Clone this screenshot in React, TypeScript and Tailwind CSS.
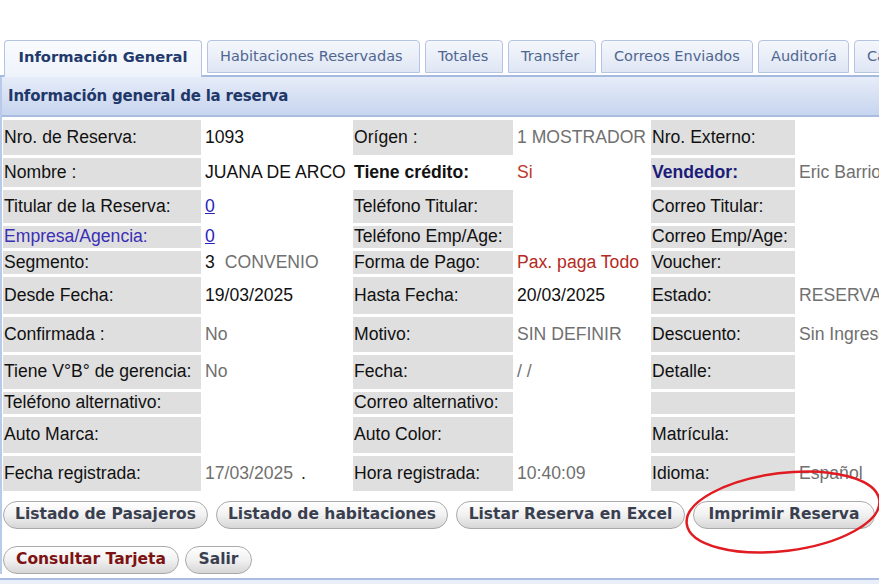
type Cell = { text?: string; kind?: "label" | "value"; color?: string; bold?: boolean; link?: boolean; extra?: string };

const GRAY = "text-[#707070]";
const RED = "text-[#c0392b]";

const rows: { h: string; cells: Cell[] }[] = [
  {
    h: "h-[35px]",
    cells: [
      { text: "Nro. de Reserva:", kind: "label" },
      { text: "1093" },
      { text: "Orígen :", kind: "label" },
      { text: "1 MOSTRADOR", color: GRAY },
      { text: "Nro. Externo:", kind: "label" },
      { text: "" },
    ],
  },
  {
    h: "h-[29px]",
    cells: [
      { text: "Nombre :", kind: "label" },
      { text: "JUANA DE ARCO" },
      { text: "Tiene crédito:", bold: true },
      { text: "Si", color: RED },
      { text: "Vendedor:", kind: "label", bold: true, color: "text-[#1c1c7a]" },
      { text: "Eric Barrios", color: GRAY },
    ],
  },
  {
    h: "h-[33px]",
    cells: [
      { text: "Titular de la Reserva:", kind: "label" },
      { text: "0", link: true },
      { text: "Teléfono Titular:", kind: "label" },
      { text: "" },
      { text: "Correo Titular:", kind: "label" },
      { text: "" },
    ],
  },
  {
    h: "h-[22px]",
    cells: [
      { text: "Empresa/Agencia:", kind: "label", color: "text-[#3b2fb5]" },
      { text: "0", link: true },
      { text: "Teléfono Emp/Age:", kind: "label" },
      { text: "" },
      { text: "Correo Emp/Age:", kind: "label" },
      { text: "" },
    ],
  },
  {
    h: "h-[23px]",
    cells: [
      { text: "Segmento:", kind: "label" },
      { text: "3", extra: "CONVENIO" },
      { text: "Forma de Pago:", kind: "label" },
      { text: "Pax. paga Todo", color: "text-[#b52a22]" },
      { text: "Voucher:", kind: "label" },
      { text: "" },
    ],
  },
  {
    h: "h-[37px]",
    cells: [
      { text: "Desde Fecha:", kind: "label" },
      { text: "19/03/2025" },
      { text: "Hasta Fecha:", kind: "label" },
      { text: "20/03/2025" },
      { text: "Estado:", kind: "label" },
      { text: "RESERVADA", color: GRAY },
    ],
  },
  {
    h: "h-[35px]",
    cells: [
      { text: "Confirmada :", kind: "label" },
      { text: "No", color: GRAY },
      { text: "Motivo:", kind: "label" },
      { text: "SIN DEFINIR", color: GRAY },
      { text: "Descuento:", kind: "label" },
      { text: "Sin Ingreso", color: GRAY },
    ],
  },
  {
    h: "h-[34px]",
    cells: [
      { text: "Tiene V°B° de gerencia:", kind: "label" },
      { text: "No", color: GRAY },
      { text: "Fecha:", kind: "label" },
      { text: "/ /", color: GRAY },
      { text: "Detalle:", kind: "label" },
      { text: "" },
    ],
  },
  {
    h: "h-[22px]",
    cells: [
      { text: "Teléfono alternativo:", kind: "label" },
      { text: "" },
      { text: "Correo alternativo:", kind: "label" },
      { text: "" },
      { text: "", kind: "label" },
      { text: "" },
    ],
  },
  {
    h: "h-[36px]",
    cells: [
      { text: "Auto Marca:", kind: "label" },
      { text: "" },
      { text: "Auto Color:", kind: "label" },
      { text: "" },
      { text: "Matrícula:", kind: "label" },
      { text: "" },
    ],
  },
  {
    h: "h-[35px]",
    cells: [
      { text: "Fecha registrada:", kind: "label" },
      { text: "17/03/2025", color: GRAY, extra: "." },
      { text: "Hora registrada:", kind: "label" },
      { text: "10:40:09", color: GRAY },
      { text: "Idioma:", kind: "label" },
      { text: "Español", color: GRAY },
    ],
  },
];

const tabs = [
  { name: "Información General", w: "w-[198px]", active: true },
  { name: "Habitaciones Reservadas", w: "w-[213px]" },
  { name: "Totales", w: "w-[78px]" },
  { name: "Transfer", w: "w-[88px]" },
  { name: "Correos Enviados", w: "w-[152px]" },
  { name: "Auditoría", w: "w-[91px]" },
  { name: "Cambios", w: "w-[100px]" },
];

function Btn({ label, w, red }: { label: string; w: string; red?: boolean }) {
  return (
    <button
      className={`${w} h-[28px] shrink-0 rounded-full border border-[#a9a9a9] bg-gradient-to-b from-white via-[#f1f1f1] to-[#d6d6d6] text-[15.5px] font-bold shadow-[inset_0_1px_0_#fff] ${
        red ? "text-[#7d1212]" : "text-[#3a3f4f]"
      }`}
      style={{ fontFamily: "'DejaVu Sans', Verdana, sans-serif" }}
    >
      {label}
    </button>
  );
}

export default function App() {
  return (
    <div
      className="relative h-[584px] w-[879px] overflow-hidden bg-white"
      style={{ fontFamily: "'Liberation Sans', Arial, sans-serif" }}
    >
      <div className="h-[40px]" />

      {/* Tabs */}
      <div
        className="flex h-[37px] items-start gap-[5px] border-b-2 border-[#a6badf] pl-[4px] text-[14.5px] whitespace-nowrap"
        style={{ fontFamily: "'DejaVu Sans', Tahoma, sans-serif" }}
      >
        {tabs.map((t) =>
          t.active ? (
            <div
              key={t.name}
              className={`${t.w} -mb-[2px] flex h-[37px] shrink-0 items-center justify-center rounded-t-[4px] border border-b-0 border-[#b5c4e3] bg-gradient-to-b from-[#f9fbfe] to-[#eef2fa] pb-[3px] text-[14.7px] font-bold text-[#22396b]`}
            >
              {t.name}
            </div>
          ) : (
            <div
              key={t.name}
              className={`${t.w} flex h-[33px] shrink-0 items-center overflow-hidden rounded-t-[4px] border border-[#b5c4e3] bg-gradient-to-b from-[#f4f7fc] to-[#dfe6f4] pl-[12px] text-[#4f6690]`}
            >
              {t.name}
            </div>
          )
        )}
      </div>

      {/* Panel */}
      <div className="border-l-2 border-[#b9c9ea]">
        <div
          className="flex h-[40px] items-center border-b-2 border-[#a9bde3] bg-gradient-to-b from-[#e6ecf8] to-[#c7d5ef] pl-[6px] text-[15px] font-bold tracking-[-0.2px] text-[#1f3769]"
          style={{ fontFamily: "'DejaVu Sans', Tahoma, sans-serif" }}
        >
          Información general de la reserva
        </div>

        <div className="grid grid-cols-[198px_146px_160px_132px_144px_200px] gap-[3px] pt-[3px] pl-[1px] text-[17.6px] leading-none whitespace-nowrap text-[#111]">
          {rows.map((r, ri) =>
            r.cells.map((c, ci) => (
              <div
                key={`${ri}-${ci}`}
                className={`${r.h} flex items-center overflow-hidden pl-[1px] ${c.kind === "label" ? "bg-[#dfdfdf]" : ""} ${c.color ?? ""} ${c.bold ? "font-bold" : ""}`}
              >
                {c.link ? (
                  <span className="text-[#2a22b8] underline">{c.text}</span>
                ) : (
                  <span>{c.text}</span>
                )}
                {c.extra && c.extra !== "." && <span className="ml-[10px] text-[#707070]">{c.extra}</span>}
                {c.extra === "." && <span className="ml-[8px] text-[#222]">.</span>}
              </div>
            ))
          )}
        </div>

        {/* Buttons */}
        <div className="mt-[10px] flex gap-[8px] pl-[1px]">
          <Btn label="Listado de Pasajeros" w="w-[205px]" />
          <Btn label="Listado de habitaciones" w="w-[232px]" />
          <Btn label="Listar Reserva en Excel" w="w-[229px]" />
          <Btn label="Imprimir Reserva" w="w-[182px]" />
        </div>
        <div className="mt-[17px] flex gap-[6px] pl-[1px]">
          <Btn label="Consultar Tarjeta" w="w-[176px]" red />
          <Btn label="Salir" w="w-[67px]" />
        </div>
      </div>

      <div className="mt-[4px] h-[10px] border-t-2 border-[#a9bde3] bg-[#e9eef8]" />

      {/* Red annotation ellipse */}
      <svg className="pointer-events-none absolute left-0 top-0" width="879" height="584">
        <ellipse
          cx="783"
          cy="512"
          rx="97"
          ry="39"
          transform="rotate(-7 783 512)"
          fill="none"
          stroke="#e01b22"
          strokeWidth="2.5"
        />
      </svg>
    </div>
  );
}
